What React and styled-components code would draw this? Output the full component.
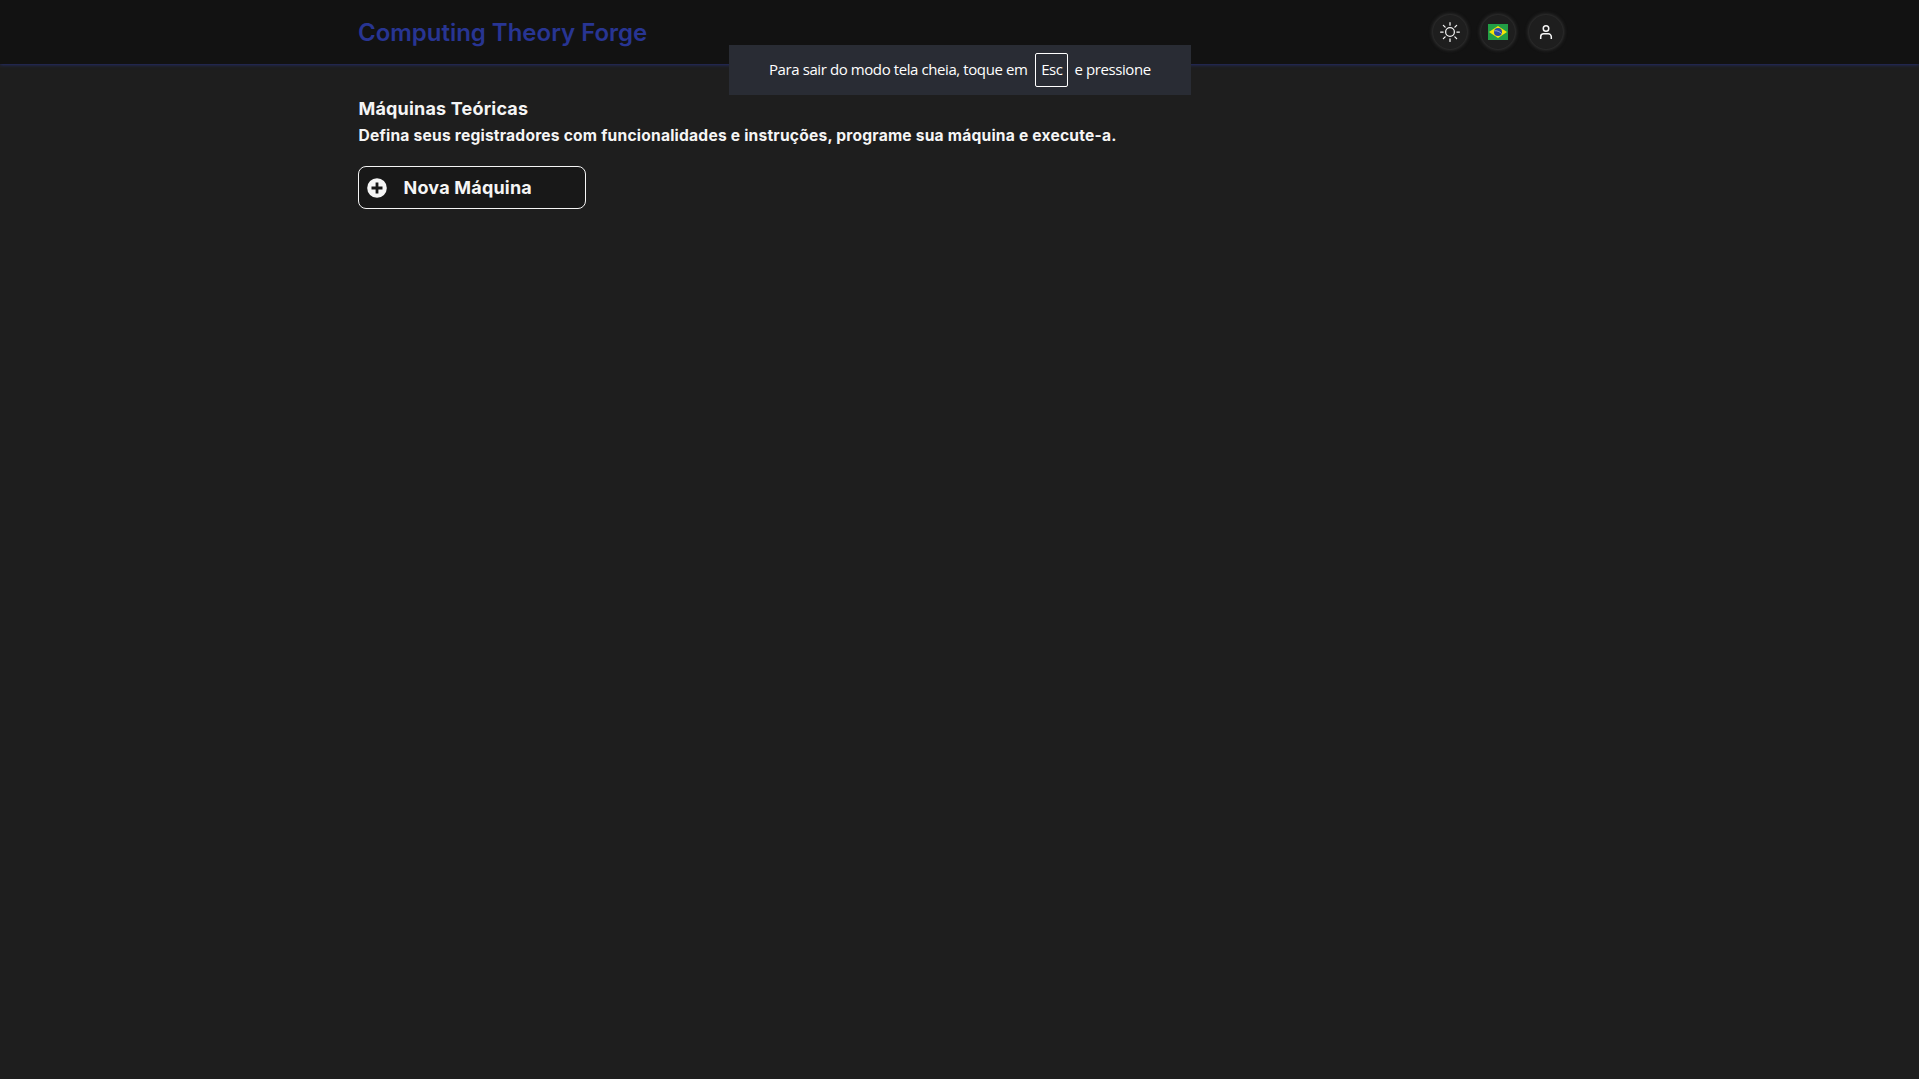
import React from "react";
import styled, { createGlobalStyle } from "styled-components";
import { BsSun } from "react-icons/bs";

const GlobalStyle = createGlobalStyle`
  * { box-sizing: border-box; }
  body {
    margin: 0;
    background: #1e1e1e;
    color: #f5f5f5;
    font-family: Inter, "Liberation Sans", sans-serif;
  }
`;

const Page = styled.div`
  display: flex;
  flex-direction: column;
  min-height: 1079px;
`;

const Header = styled.header`
  display: flex;
  justify-content: center;
  height: 64px;
  background: #121212;
  box-shadow: 0 0 4px #283593;
`;

const HeaderInner = styled.div`
  display: flex;
  align-items: center;
  justify-content: space-between;
  width: 1207px;
`;

const Brand = styled.h1`
  margin: 0 0 0 2px;
  padding-top: 2px;
  font-size: 24px;
  font-weight: 600;
  line-height: 30px;
  letter-spacing: -0.02px;
  color: #283593;
`;

const Actions = styled.div`
  display: flex;
  gap: 14px;
`;

const RoundButton = styled.button`
  display: flex;
  align-items: center;
  justify-content: center;
  width: 34px;
  height: 34px;
  padding: 0;
  border: 0;
  border-radius: 50%;
  background: #1e1e1e;
  color: #f5f5f5;
  box-shadow: 0 0 4px #4a4a4a;
`;

const Main = styled.main`
  display: flex;
  flex-direction: column;
  align-items: flex-start;
  align-self: center;
  width: 1203px;
  padding-top: 31px;
`;

const Heading = styled.h2`
  margin: 0;
  padding-left: 0.5px;
  font-size: 18px;
  font-weight: 700;
  line-height: 28px;
  letter-spacing: 0.18px;
`;

const Description = styled.h3`
  margin: 0 0 17px;
  padding-left: 0.5px;
  font-size: 15.6px;
  font-weight: 700;
  line-height: 26px;
  letter-spacing: 0.208px;
`;

const NewMachineButton = styled.button`
  display: flex;
  align-items: center;
  gap: 16.5px;
  width: 228px;
  height: 43px;
  padding: 0 8px;
  border: 1px solid #f5f5f5;
  border-radius: 8px;
  background: #181818;
  color: #f5f5f5;
  font: 700 18px/24px Inter, "Liberation Sans", sans-serif;
  letter-spacing: 0.2px;
`;

const Toast = styled.div`
  position: absolute;
  top: 45px;
  left: 729px;
  display: flex;
  align-items: center;
  width: 462px;
  height: 50px;
  padding-left: 40px;
  background: #292c34;
  color: #fff;
  font: 15px/20px "Open Sans", "Noto Sans", sans-serif;
  letter-spacing: -0.41px;
  white-space: nowrap;
`;

const ToastText = styled.span`
  padding-bottom: 2px;
`;

const Key = styled.kbd`
  display: flex;
  align-items: center;
  justify-content: center;
  width: 33px;
  height: 34px;
  margin: 0 6px 0 8px;
  padding-bottom: 2px;
  border: 1px solid #fff;
  border-radius: 2px;
  font: inherit;
`;

function BrazilFlag() {
  return (
    <svg width="20" height="16" viewBox="0 0 20 16">
      <rect width="20" height="16" fill="#229e45" />
      <path d="M10 2 19 8 10 14 1 8Z" fill="#f8e509" />
      <circle cx="10" cy="8" r="4" fill="#2b49a3" />
      <path d="M6.4 6.8c2.7-.3 5.2.7 7.2 2.8" fill="none" stroke="#dfe8ef" strokeWidth=".6" />
    </svg>
  );
}

function PersonIcon() {
  return (
    <svg width="16" height="16" viewBox="0 0 16 16" fill="none" stroke="currentColor" strokeWidth="1.5">
      <circle cx="8" cy="4.5" r="2.75" />
      <path d="M2.7 15v-2.2a3 3 0 0 1 3-3h4.600a3 3 0 0 1 3 3V15" />
    </svg>
  );
}

function PlusCircleIcon() {
  return (
    <svg width="20" height="20" viewBox="0 0 20 20">
      <circle cx="10" cy="10" r="9.8" fill="currentColor" />
      <path d="M10 4.5v11M4.5 10h11" stroke="#181818" strokeWidth="2.8" />
    </svg>
  );
}

export default function App() {
  return (
    <Page>
      <GlobalStyle />
      <Header>
        <HeaderInner>
          <Brand>Computing Theory Forge</Brand>
          <Actions>
            <RoundButton aria-label="Tema"><BsSun size={20} /></RoundButton>
            <RoundButton aria-label="Idioma"><BrazilFlag /></RoundButton>
            <RoundButton aria-label="Perfil"><PersonIcon /></RoundButton>
          </Actions>
        </HeaderInner>
      </Header>
      <Main>
        <Heading>Máquinas Teóricas</Heading>
        <Description>
          Defina seus registradores com funcionalidades e instruções, programe sua máquina e execute-a.
        </Description>
        <NewMachineButton>
          <PlusCircleIcon />
          Nova Máquina
        </NewMachineButton>
      </Main>
      <Toast>
        <ToastText>Para sair do modo tela cheia, toque em</ToastText>
        <Key>Esc</Key>
        <ToastText>e pressione</ToastText>
      </Toast>
    </Page>
  );
}
